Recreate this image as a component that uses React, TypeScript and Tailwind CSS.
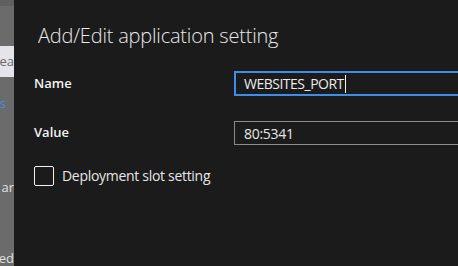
export default function App() {
  return (
    <div className="flex h-[266px] w-[458px] overflow-hidden bg-[#1b1b1b] font-['Open_Sans',sans-serif]">
      <aside className="flex w-[14px] shrink-0 flex-col overflow-hidden bg-[#6b6b6b] text-[13px] leading-none">
        <div className="h-[6px] bg-[#5f5f5f]" />
        <div className="mt-[40px] flex h-[31px] items-center justify-end overflow-hidden whitespace-nowrap bg-[#e4e4ea] text-[#6a6a6a]">
          ea
        </div>
        <div className="mt-[20px] h-[14px] overflow-hidden whitespace-nowrap text-[#3d8fe6]">s</div>
        <div className="mt-[70px] flex justify-end overflow-hidden whitespace-nowrap text-[#e0e0e0]">r ar</div>
        <div className="mt-[58px] flex justify-end overflow-hidden whitespace-nowrap text-[#e0e0e0]">ed</div>
      </aside>

      <main className="flex-1 overflow-hidden pl-[20px] pt-[22px]">
        <h1 className="pl-[4px] text-[20px] font-light leading-[28px] tracking-[-0.2px] text-[#e8e8e8]">
          Add/Edit application setting
        </h1>

        <div className="mt-[21px] grid grid-cols-[200px_260px] items-center gap-y-[25px]">
          <label className="text-[13px] font-semibold text-[#f2f2f2]">Name</label>
          <div className="flex h-[25px] items-center border-2 border-[#3b8eea] pl-[8px] text-[14px] tracking-[-0.5px] text-[#ececec]">
            WEBSITES_PORT
            <span className="ml-px h-[18px] w-px bg-[#f0f0f0]" />
          </div>

          <label className="text-[13px] font-semibold text-[#f2f2f2]">Value</label>
          <div className="flex h-[24px] items-center border border-[#8c8c8c] pl-[9px] text-[14px] tracking-[-0.3px] text-[#e6e6e6]">
            80:5341
          </div>
        </div>

        <label className="mt-[20px] flex items-center gap-[8px]">
          <span className="h-[20px] w-[20px] rounded-[2px] border border-[#f0f0f0]" />
          <span className="text-[14px] tracking-[-0.3px] text-[#e6e6e6]">Deployment slot setting</span>
        </label>
      </main>
    </div>
  );
}
